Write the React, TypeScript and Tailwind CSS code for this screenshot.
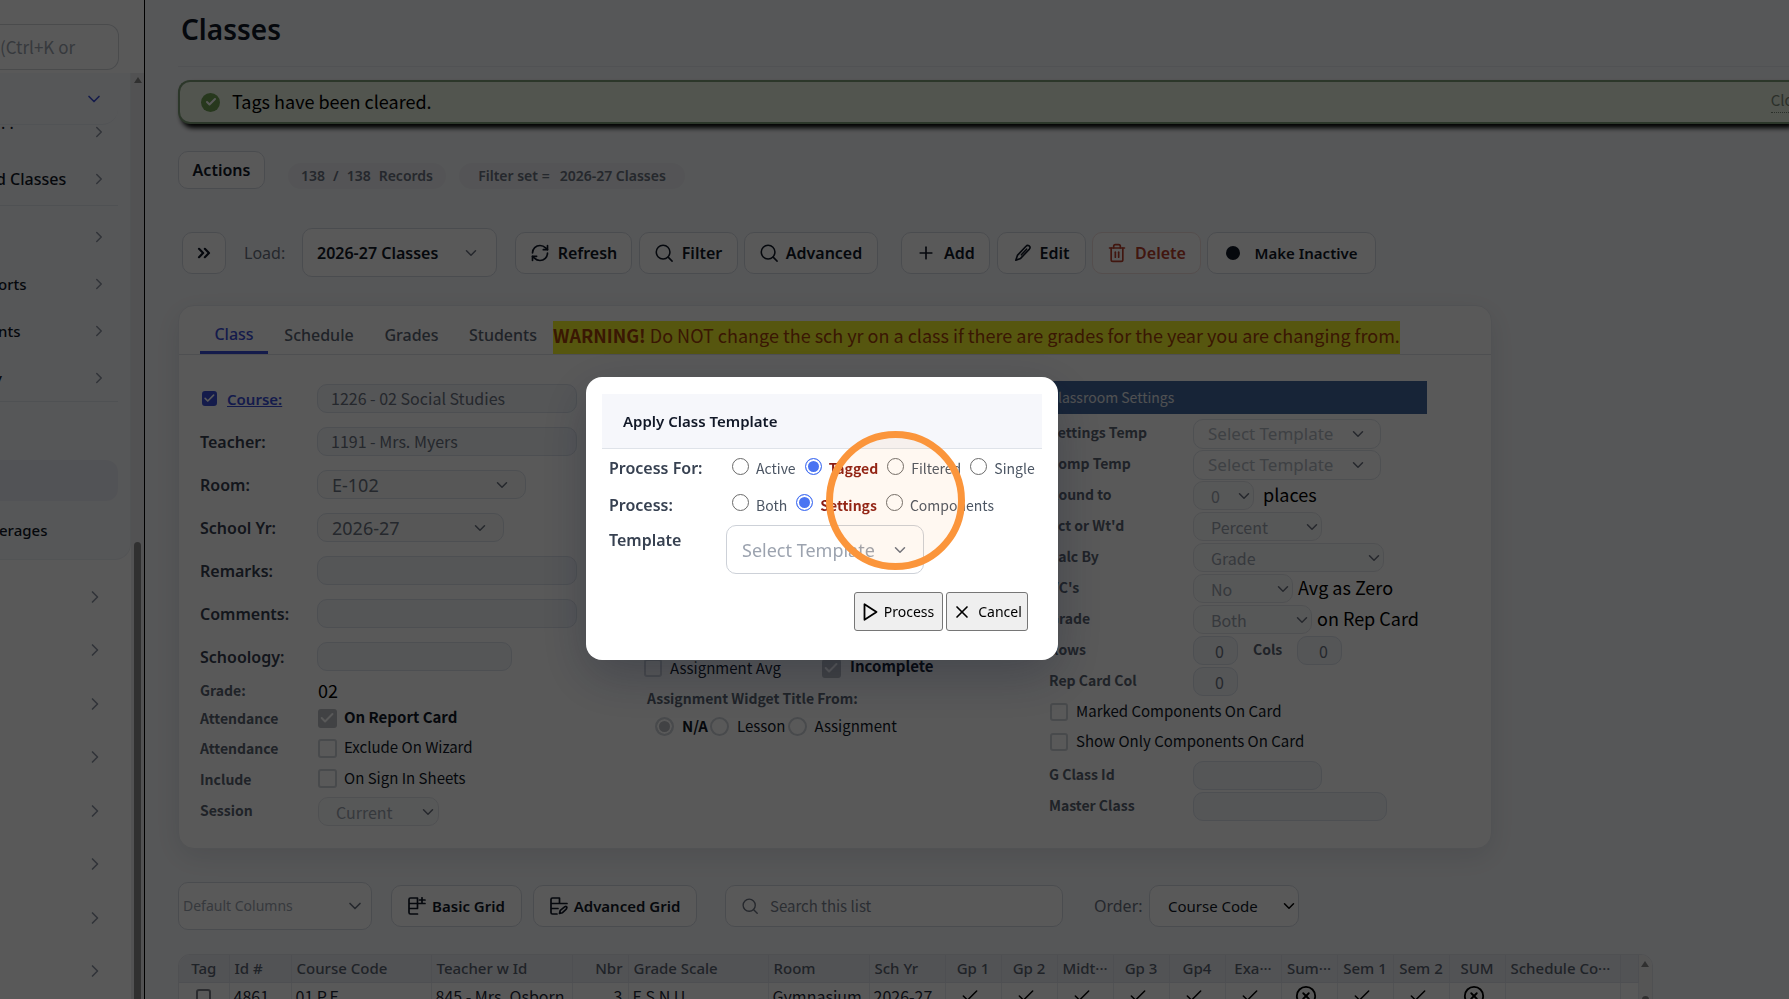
import React from "react";
import { ChevronDown, ChevronRight, ChevronsRight, RefreshCw, Plus, Trash2, Check, X, CircleX } from "lucide-react";

const SRC = "font-['Noto_Sans_CJK_SC','Noto_Sans',sans-serif]";

function SearchIcon({ className }: { className: string }) {
  return (
    <svg viewBox="0 0 20 20" fill="none" stroke="currentColor" strokeWidth="1.7" strokeLinecap="round" className={className} aria-hidden="true">
      <circle cx="9" cy="9" r="7.6" />
      <path d="M14.6 14.6 19 19" />
    </svg>
  );
}

function PencilIcon() {
  return (
    <svg viewBox="0 0 18 18" fill="none" stroke="currentColor" strokeWidth="1.6" strokeLinejoin="round" strokeLinecap="round" className="size-[18px]" aria-hidden="true">
      <path d="M1.800 16.200l1.600-4.800L12 2.200a2.200 2.200 0 0 1 3.400 2.900L6.600 14.400z" />
      <path d="M12.600 5.200L7.400 10.800" />
    </svg>
  );
}

function PlayIcon() {
  return (
    <svg viewBox="0 0 15 18" fill="none" stroke="currentColor" strokeWidth="1.8" strokeLinejoin="round" className="h-[18px] w-[15px]" aria-hidden="true">
      <path d="M1.500 1.200V16.800L13.500 9z" />
    </svg>
  );
}

function GridPlusIcon() {
  return (
    <svg viewBox="0 0 18 18" fill="none" stroke="currentColor" strokeWidth="1.7" strokeLinecap="round" strokeLinejoin="round" className="size-[18px]" aria-hidden="true">
      <path d="M9.500 17H2.500Q1 17 1 15.500V2.500Q1 1 2.500 1H9.500V11.500M1 6.500H17M1 11.500H9.500M14 0.800V6M11.500 3H17" />
    </svg>
  );
}

function GridPenIcon() {
  return (
    <svg viewBox="0 0 18 18" fill="none" stroke="currentColor" strokeWidth="1.7" strokeLinecap="round" strokeLinejoin="round" className="size-[18px]" aria-hidden="true">
      <path d="M7 17H2.500Q1 17 1 15.500V2.500Q1 1 2.500 1H9.500V6.500M1 6.500H17M1 11.500H8" />
      <path d="M9.500 16.500l.8-3.200 4.600-3.600q1.600-.8 2 .6-.2 1.600-1.400 2.600l-3 2.800z" />
    </svg>
  );
}

type SelectProps = { label: string; value: string; id?: string; wrap: string; field: string; chevron?: string; disabled?: boolean };

function Select({ label, value, id, wrap, field, chevron = "right-[9px] size-[18px] text-[#6b7280]", disabled }: SelectProps) {
  return (
    <div className={`relative shrink-0 ${wrap}`}>
      <select id={id} aria-label={label} defaultValue={value} disabled={disabled} className={`size-full appearance-none rounded-[10px] border opacity-100 outline-none ${field}`}>
        <option>{value}</option>
      </select>
      <ChevronDown className={`pointer-events-none absolute top-1/2 -translate-y-1/2 ${chevron}`} strokeWidth={2} />
    </div>
  );
}

function Box({ id, checked, size = "size-[19px]", tone = "border-[#cfd3da] checked:border-[#b9bcc2] checked:bg-[#b9bcc2]" }: { id: string; checked?: boolean; size?: string; tone?: string }) {
  return (
    <span className={`relative block shrink-0 ${size}`}>
      <input id={id} type="checkbox" defaultChecked={checked} className={`block size-full appearance-none rounded-[3px] border-2 bg-white ${tone}`} />
      {checked && <Check className="pointer-events-none absolute inset-0 m-auto size-[85%] text-white" strokeWidth={3} />}
    </span>
  );
}

const toolBtn = "flex h-[42px] shrink-0 items-center justify-center rounded-[10px] border border-[#d5dbe3] bg-white font-semibold leading-5 text-[#111827]";

function Sidebar() {
  const rows = ["", "orts", "nts", "y"];
  return (
    <aside className="flex h-screen w-[145px] shrink-0 flex-col overflow-hidden border-r border-black bg-white">
      <div className="h-[73px] pr-[25px] pt-6">
        <input aria-label="Search menu" placeholder="(Ctrl+K or" className={`h-[46px] w-full rounded-r-xl border border-l-0 border-[#d3d6db] pb-0.5 text-[17px] placeholder:text-[#9ca3af] ${SRC}`} />
      </div>
      <div className="flex min-h-0 flex-1">
        <nav className="flex min-w-0 flex-1 flex-col">
          <div className="rounded-br-2xl border-b border-r border-[#eceff4] bg-[#f7f9fc]">
            <div className="mr-3 flex h-[52px] items-center justify-end rounded-br-2xl border-b border-[#e9edf3] pr-[14px]">
              <ChevronDown className="size-[20px] text-[#3b4fd8]" strokeWidth={2} />
            </div>
            <div className="flex h-[28px] items-start justify-between pr-[22px]">
              <span className="-mt-2.5 pl-px text-base leading-4 text-[#111827]">. .</span>
              <ChevronRight className="-mt-0.5 size-[18px] text-[#8b93a1]" strokeWidth={2} />
            </div>
            <div className="mr-3 flex h-[53px] items-center justify-between border-b border-[#e3e7ee] pr-[10px]">
              <span className="-ml-1 text-base font-medium leading-5 text-[#111827]">d Classes</span>
              <ChevronRight className="size-[18px] text-[#8b93a1]" strokeWidth={2} />
            </div>
            <div className="pt-[7px]">
              {rows.map((t, i) => (
                <div key={i} className="flex h-[47px] items-center justify-between pr-[22px]">
                  <span className={`text-[15px] font-medium leading-5 text-[#111827] ${t === "y" ? "-ml-1.5" : "-ml-0.5"}`}>{t}</span>
                  <ChevronRight className="size-[18px] text-[#8b93a1]" strokeWidth={2} />
                </div>
              ))}
            </div>
            <div className="mr-3 border-t border-[#e3e7ee]" />
            <div className="mr-3 mt-[58px] h-[41px] rounded-r-xl bg-[#eceef5]" />
            <div className="flex h-[58px] items-center">
              <span className="-ml-px text-[15px] font-medium leading-5 text-[#111827]">erages</span>
            </div>
          </div>
          <div className="mt-[10px] flex flex-col">
            {Array.from({ length: 9 }, (_, i) => (
              <div key={i} className="flex h-[53px] shrink-0 items-center justify-end pr-[26px] even:h-[54px]">
                <ChevronRight className="size-[20px] text-[#8b93a1]" strokeWidth={2} />
              </div>
            ))}
          </div>
        </nav>
        <div className="flex w-[13px] shrink-0 flex-col items-center justify-between bg-[#ececee] pt-1">
          <svg viewBox="0 0 8 6" className="w-2" aria-hidden="true"><path d="M4 0l4 6H0z" fill="#8b8b8b" /></svg>
          <div className="h-[457px] w-[7px] rounded-t-full bg-[#8b8b8b]" />
        </div>
      </div>
    </aside>
  );
}

const leftLabel = "w-[117px] shrink-0 text-base font-semibold leading-5 text-[#374151]";
const smallLabel = `w-[118px] shrink-0 text-[14px] font-bold leading-5 text-[#5b6472] ${SRC}`;
const textField = `h-[29px] rounded-[10px] border border-[#dce2ea] bg-[#f3f6fa] px-[13px] text-base leading-5 text-[#6b7280] ${SRC}`;
const optText = `text-[15px] leading-5 text-[#111827] ${SRC}`;
const rightLabel = `w-[144px] shrink-0 pb-1 text-[14px] font-bold leading-5 text-[#5b6472] ${SRC}`;
const dimSelect = `border-[#e3e6eb] bg-[#fafbfc] pl-[17px] text-base leading-5 text-[#9ca3af] ${SRC}`;
const bigText = `whitespace-nowrap text-[18px] leading-6 text-black ${SRC}`;

function LeftForm() {
  return (
    <div className="w-[377px] shrink-0 pt-[29px]">
      <div className="flex flex-col gap-[14px]">
        <div className="flex h-[29px] items-center">
          <div className="flex w-[117px] shrink-0 items-center gap-[10px] pl-0.5">
            <Box id="course" checked size="size-[15px]" tone="border-[#3b4fd8] checked:bg-[#3b4fd8]" />
            <a href="#course" className="text-[15px] font-semibold leading-5 text-[#3b4fd8] underline">Course:</a>
          </div>
          <input aria-label="Course" defaultValue="1226 - 02 Social Studies" className={`w-full pb-0.5 ${textField}`} />
        </div>
        <div className="flex h-[29px] items-center">
          <label htmlFor="teacher" className={leftLabel}>Teacher:</label>
          <input id="teacher" defaultValue="1191 - Mrs. Myers" className={`w-full pb-0.5 ${textField}`} />
        </div>
        <div className="flex h-[29px] items-center">
          <label htmlFor="room" className={leftLabel}>Room:</label>
          <Select id="room" label="Room" value="E-102" wrap="h-[29px] w-[209px]" field="border-[#dce2ea] bg-[#f8faf9] pl-[14px] text-[18px] leading-5 text-[#6b7280]" chevron="right-[15px] size-[18px] text-[#6b7280]" />
        </div>
        <div className="flex h-[29px] items-center">
          <label htmlFor="year" className={leftLabel}>School Yr:</label>
          <Select id="year" label="School Yr" value="2026-27" wrap="h-[29px] w-[187px]" field="border-[#dce2ea] bg-[#f8faf9] pl-[14px] text-[18px] leading-5 text-[#6b7280]" chevron="right-[15px] size-[18px] text-[#6b7280]" />
        </div>
        <div className="flex h-[29px] items-center">
          <label htmlFor="remarks" className={leftLabel}>Remarks:</label>
          <input id="remarks" className={`w-full ${textField}`} />
        </div>
        <div className="flex h-[29px] items-center">
          <label htmlFor="comments" className={leftLabel}>Comments:</label>
          <input id="comments" className={`w-full ${textField}`} />
        </div>
        <div className="flex h-[29px] items-center">
          <label htmlFor="schoology" className={leftLabel}>Schoology:</label>
          <input id="schoology" className={`w-[195px] ${textField}`} />
        </div>
      </div>
      <div className="mt-[5px] flex h-[27px] items-center">
        <span className={smallLabel}>Grade:</span>
        <span className={bigText}>02</span>
      </div>
      <div className="flex h-[30px] items-center">
        <span className={smallLabel}>Attendance</span>
        <Box id="report" checked />
        <label htmlFor="report" className={`pb-0.5 pl-[7px] font-bold ${optText}`}>On Report Card</label>
      </div>
      <div className="flex h-[30px] items-center">
        <span className={smallLabel}>Attendance</span>
        <Box id="wizard" />
        <label htmlFor="wizard" className={`pb-0.5 pl-[7px] ${optText}`}>Exclude On Wizard</label>
      </div>
      <div className="flex h-[31px] items-center">
        <span className={smallLabel}>Include</span>
        <Box id="sheets" />
        <label htmlFor="sheets" className={`pb-0.5 pl-[7px] ${optText}`}>On Sign In Sheets</label>
      </div>
      <div className="flex h-[32px] items-end">
        <label htmlFor="session" className={`pb-1.5 ${smallLabel}`}>Session</label>
        <Select id="session" label="Session" value="Current" wrap="h-[29px] w-[121px]" field={dimSelect} chevron="right-[2px] size-[18px] text-[#6b7280]" />
      </div>
    </div>
  );
}

function MiddleForm() {
  return (
    <div className="w-[405px] shrink-0 pl-[67px] pt-[301px]">
      <div className="flex h-6 items-center">
        <Box id="avg" size="size-[18px]" />
        <label htmlFor="avg" className={`w-[160px] pl-[8px] ${optText}`}>Assignment Avg</label>
        <Box id="inc" checked />
        <label htmlFor="inc" className={`pb-1 pl-[9px] font-bold ${optText}`}>Incomplete</label>
      </div>
      <div className={`mt-1.5 h-6 pl-[3px] text-[14px] font-bold leading-6 text-[#5b6472] ${SRC}`}>Assignment Widget Title From:</div>
      <div className="mt-1 flex h-6 items-center pl-[11px]">
        {["N/A", "Lesson", "Assignment"].map((t, i) => (
          <label key={t} className={`flex items-center gap-[8px] pr-[2px] ${optText} ${i === 0 ? "font-bold" : ""}`}>
            <input type="radio" name="widget" defaultChecked={i === 0} className="size-[19px] appearance-none rounded-full border-2 border-[#cfd3da] bg-white checked:bg-[#b9bcc2] checked:shadow-[inset_0_0_0_2px_#fff]" />
            {t}
          </label>
        ))}
      </div>
    </div>
  );
}

function RightForm() {
  const row = "flex h-[31px] items-center";
  const arrow = "right-[1px] size-[18px] text-[#6b7280]";
  const tplField = "border-[#dfe4ea] bg-white pl-[14px] text-[17px] leading-5 text-[#b3b9c3]";
  return (
    <div className="w-[378px] shrink-0 pt-[26px]">
      <div className={`flex h-[33px] items-center bg-[#44699f] pb-0.5 text-[14px] leading-5 text-[#e5e7eb] ${SRC}`}>Classroom Settings</div>
      <div className="mt-[4px] flex flex-col">
        <div className={row}>
          <label htmlFor="st" className={rightLabel}>Settings Temp</label>
          <Select id="st" label="Settings Temp" value="Select Template" wrap="h-[30px] w-[188px]" field={tplField} chevron="right-[14px] size-[18px] text-[#6b7280]" />
        </div>
        <div className={row}>
          <label htmlFor="ct" className={rightLabel}>Comp Temp</label>
          <Select id="ct" label="Comp Temp" value="Select Template" wrap="h-[30px] w-[188px]" field={tplField} chevron="right-[14px] size-[18px] text-[#6b7280]" />
        </div>
        <div className={row}>
          <label htmlFor="rt" className={rightLabel}>Round to</label>
          <Select id="rt" label="Round to" value="0" wrap="h-[29px] w-[61px]" field={dimSelect} chevron={arrow} />
          <span className={`pb-1 pl-[9px] ${bigText}`}>places</span>
        </div>
        <div className={row}>
          <label htmlFor="pw" className={rightLabel}>Pct or Wt'd</label>
          <Select id="pw" label="Pct or Wt'd" value="Percent" wrap="h-[29px] w-[129px]" field={dimSelect} chevron={arrow} />
        </div>
        <div className={row}>
          <label htmlFor="cb" className={rightLabel}>Calc By</label>
          <Select id="cb" label="Calc By" value="Grade" wrap="h-[29px] w-[191px]" field={dimSelect} chevron={arrow} />
        </div>
        <div className={row}>
          <label htmlFor="nc" className={rightLabel}>I/C's</label>
          <Select id="nc" label="I/C's" value="No" wrap="h-[29px] w-[100px]" field={dimSelect} chevron={arrow} />
          <span className={`pb-1 pl-[5px] ${bigText}`}>Avg as Zero</span>
        </div>
        <div className={row}>
          <label htmlFor="gr" className={rightLabel}>Grade</label>
          <Select id="gr" label="Grade" value="Both" wrap="h-[29px] w-[119px]" field={dimSelect} chevron={arrow} />
          <span className={`pb-1 pl-[5px] ${bigText}`}>on Rep Card</span>
        </div>
        <div className={row}>
          <label htmlFor="rows" className={rightLabel}>Rows</label>
          <input id="rows" defaultValue="0" className={`w-[45px] text-right ${textField}`} />
          <label htmlFor="cols" className={`w-[59px] pb-1 pl-[15px] text-[14px] font-bold leading-5 text-[#5b6472] ${SRC}`}>Cols</label>
          <input id="cols" defaultValue="0" className={`w-[45px] text-right ${textField}`} />
        </div>
        <div className={row}>
          <label htmlFor="rc" className={rightLabel}>Rep Card Col</label>
          <input id="rc" defaultValue="0" className={`w-[45px] text-right ${textField}`} />
        </div>
        <div className="flex h-[30px] items-center pl-px">
          <Box id="marked" size="size-[18px]" />
          <label htmlFor="marked" className={`pb-0.5 pl-[8px] ${optText}`}>Marked Components On Card</label>
        </div>
        <div className="flex h-[30px] items-center pl-px">
          <Box id="only" size="size-[18px]" />
          <label htmlFor="only" className={`pb-0.5 pl-[8px] ${optText}`}>Show Only Components On Card</label>
        </div>
        <div className={`mt-[3px] ${row}`}>
          <label htmlFor="gid" className={rightLabel}>G Class Id</label>
          <input id="gid" className={`w-[129px] ${textField}`} />
        </div>
        <div className={row}>
          <label htmlFor="mc" className={rightLabel}>Master Class</label>
          <input id="mc" className={`w-[194px] ${textField}`} />
        </div>
      </div>
    </div>
  );
}

const cols = [
  { t: "Tag", w: "w-[50px]", a: "text-center" },
  { t: "Id #", w: "w-[62px]", a: "" },
  { t: "Course Code", w: "w-[140px]", a: "" },
  { t: "Teacher w Id", w: "w-[141px]", a: "" },
  { t: "Nbr", w: "w-[56px]", a: "text-right" },
  { t: "Grade Scale", w: "w-[140px]", a: "" },
  { t: "Room", w: "w-[101px]", a: "" },
  { t: "Sch Yr", w: "w-[76px]", a: "" },
  { t: "Gp 1", w: "w-[56px]", a: "text-center" },
  { t: "Gp 2", w: "w-[56px]", a: "text-center" },
  { t: "Midt···", w: "w-[56px]", a: "text-center" },
  { t: "Gp 3", w: "w-[56px]", a: "text-center" },
  { t: "Gp4", w: "w-[56px]", a: "text-center" },
  { t: "Exa···", w: "w-[56px]", a: "text-center" },
  { t: "Sum···", w: "w-[56px]", a: "text-center" },
  { t: "Sem 1", w: "w-[56px]", a: "text-center" },
  { t: "Sem 2", w: "w-[56px]", a: "text-center" },
  { t: "SUM", w: "w-[56px]", a: "text-center" },
  { t: "Schedule Co···", w: "w-[115px]", a: "" },
  { t: "", w: "w-[18px]", a: "" },
];
const cells = ["box", "4861", "01 P.E.", "845 - Mrs. Osborn", "3", "E S N U", "Gymnasium", "2026-27", "y", "y", "y", "y", "y", "y", "n", "y", "y", "n", "", ""];

function Cell({ v }: { v: string }) {
  if (v === "box") return <input type="checkbox" aria-label="Tag row" className="mx-auto block size-[15px] appearance-none rounded-[3px] border-2 border-[#7b7f87] bg-white" />;
  if (v === "y") return <Check className="mx-auto block size-[20px] text-black" strokeWidth={1.8} />;
  if (v === "n") return <CircleX className="mx-auto block size-[22px] text-black" strokeWidth={2} />;
  return <>{v}</>;
}

function DataGrid() {
  return (
    <div className="mt-6 flex w-[1475px] shrink-0 overflow-hidden rounded-t-xl border border-[#e1e4ea] bg-white">
      <table className="w-[1459px] shrink-0 table-fixed border-collapse">
        <thead>
          <tr className="h-[27px] bg-[#eceef4]">
            {cols.map((c, i) => (
              <th key={i} className={`whitespace-nowrap border-b border-r border-[#dfe2ea] text-[15px] font-medium leading-5 text-[#5b6472] ${c.w} ${c.a === "text-center" ? "px-0 text-center" : c.a === "" ? "px-[5px] text-left" : "px-[5px] text-right"}`}>{c.t}</th>
            ))}
          </tr>
        </thead>
        <tbody>
          <tr className="h-[28px]">
            {cells.map((v, i) => (
              <td key={i} className={`whitespace-nowrap border-r border-[#e8ebf0] pl-[4px] text-base leading-5 text-[#1f2937] ${SRC} ${cols[i].a} ${v === "y" || v === "n" ? "pr-[10px]" : "pr-[5px]"}`}><Cell v={v} /></td>
            ))}
          </tr>
        </tbody>
      </table>
      <div className="flex min-w-0 flex-1 flex-col items-center justify-between overflow-hidden bg-[#f3f3f4] pt-1.5">
        <svg viewBox="0 0 8 6" className="w-2" aria-hidden="true"><path d="M4 0l4 6H0z" fill="#8b8b8b" /></svg>
        <div className="h-[14px] w-[7px] rounded-t-full bg-[#8b8b8b]" />
      </div>
    </div>
  );
}

function Main() {
  return (
    <main className="flex min-w-0 flex-1 flex-col bg-[#f7f9fc] pl-[33px]">
      <header className="flex h-[67px] shrink-0 items-start border-b border-[#e8ebf0] pl-[3px] pt-3">
        <h1 className="text-[28px] font-semibold leading-[34px] text-[#111827]">Classes</h1>
      </header>
      <div role="status" className="mt-[13px] flex h-[44px] shrink-0 items-center rounded-l-xl border-2 border-r-0 border-[#7f9f78] bg-[#eaf2e2] pl-[21px] shadow-[3px_4px_5px_#000]">
        <span className="flex size-[19px] items-center justify-center rounded-full bg-[#6fa055]">
          <Check className="size-3 text-white" strokeWidth={4} />
        </span>
        <span className={`pb-0.5 pl-[12px] ${bigText}`}>Tags have been cleared.</span>
        <a href="#close" className={`-mr-5 mb-1 ml-auto border-b border-dotted border-[#7c8a78] text-[15px] leading-6 text-[#7c8a78] ${SRC}`}>Close</a>
      </div>
      <div className="mt-[27px] flex h-[38px] shrink-0 items-start">
        <button className="flex h-[38px] w-[87px] items-center justify-center rounded-[10px] border border-[#d5dbe3] bg-white text-base font-semibold leading-5 text-[#111827]">Actions</button>
        <span className="ml-[23px] mt-3 flex h-[26px] w-[158px] items-center justify-center gap-2 rounded-full bg-[#eff1f5] text-sm font-semibold leading-4 text-[#6b7280]">
          <span>138</span><span>/</span><span>138</span><span>Records</span>
        </span>
        <span className="ml-[13px] mt-3 flex h-[26px] w-[226px] items-center justify-center gap-2.5 rounded-full bg-[#eff1f5] text-sm font-semibold leading-4 text-[#6b7280]">
          <span>Filter set =</span><span>2026-27 Classes</span>
        </span>
      </div>
      <div className="mt-[39px] flex h-[49px] shrink-0 items-center pl-1">
        <button aria-label="Expand" className={`${toolBtn} w-[44px]`}><ChevronsRight className="size-5" strokeWidth={2.6} /></button>
        <label htmlFor="load" className="w-[76px] pl-[18px] text-base leading-5 text-[#6b7280]">Load:</label>
        <Select id="load" label="Load" value="2026-27 Classes" wrap="h-[49px] w-[195px]" field="border-[#d5dbe3] bg-white pl-[14px] text-base font-semibold leading-5 text-[#111827]" chevron="right-[17px] size-[18px] text-[#6b7280]" />
        <button className={`${toolBtn} ml-[18px] w-[117px] gap-[8px]`}><RefreshCw className="size-[20px]" strokeWidth={2} />Refresh</button>
        <button className={`${toolBtn} ml-[7px] w-[99px] gap-[9px]`}><SearchIcon className="size-[18px]" />Filter</button>
        <button className={`${toolBtn} ml-[6px] w-[134px] gap-[8px]`}><SearchIcon className="size-[18px]" />Advanced</button>
        <button className={`${toolBtn} ml-[23px] w-[89px] gap-[8px]`}><Plus className="size-[20px]" strokeWidth={2} />Add</button>
        <button className={`${toolBtn} ml-[7px] w-[89px] gap-[8px]`}><PencilIcon />Edit</button>
        <button className={`${toolBtn} ml-[6px] w-[109px] gap-[8px] !border-[#f0dedd] !text-[#b9402c]`}><Trash2 className="size-[20px]" strokeWidth={2} />Delete</button>
        <button className={`${toolBtn} ml-[6px] w-[169px] gap-[15px] text-[15px]`}><span className="size-[14px] rounded-full bg-[#111827]" />Make Inactive</button>
      </div>
      <section className="mt-[28px] w-full max-w-[1314px] shrink-0 rounded-2xl border border-[#e8ebf0] bg-white pb-[22px] shadow-[0_8px_28px_rgba(15,23,42,0.1)]">
        <div className="flex h-[49px] items-end border-b border-[#dfe3e9] pl-[21px]">
          <button className="h-9 w-[68px] border-b-[3px] border-[#3b4fd8] pb-[1px] text-base font-medium leading-5 text-[#3b4fd8]">Class</button>
          <button className="h-9 w-[102px] pb-0.5 text-base font-medium leading-5 text-[#5b6472]">Schedule</button>
          <button className="h-9 w-[83px] pb-0.5 text-base font-medium leading-5 text-[#5b6472]">Grades</button>
          <button className="h-9 w-[100px] pb-0.5 text-base font-medium leading-5 text-[#5b6472]">Students</button>
          <p className={`h-[33px] whitespace-nowrap bg-[#f7f72c] text-[18px] leading-[29px] text-[#a5420a] ${SRC}`}>
            <b>WARNING!</b> Do NOT change the sch yr on a class if there are grades for the year you are changing from.
          </p>
        </div>
        <div className="flex pl-[21px]">
          <LeftForm />
          <MiddleForm />
          <div className="w-[67px] shrink-0" />
          <RightForm />
        </div>
      </section>
      <div className="mt-[33px] flex h-[48px] shrink-0 items-center">
        <Select label="Columns" value="Default Columns" wrap="h-[48px] w-[194px]" field="border-[#d5dbe3] bg-white pl-[4px] text-sm leading-5 text-[#9ca3af]" chevron="right-[7px] size-5 text-[#6b7280]" />
        <button className={`${toolBtn} ml-[19px] w-[131px] gap-[6px] text-[15px]`}><GridPlusIcon />Basic Grid</button>
        <button className={`${toolBtn} ml-[11px] w-[164px] gap-[6px] text-[15px]`}><GridPenIcon />Advanced Grid</button>
        <div className="relative ml-[28px] h-[42px] w-[338px] text-[#6b7280]">
          <input type="search" aria-label="Search this list" placeholder="Search this list" className={`size-full rounded-[10px] border border-[#d5dbe3] bg-white pb-0.5 pl-[44px] text-[15px] placeholder:text-[#7b8391] ${SRC}`} />
          <SearchIcon className="absolute left-[17px] top-[13px] size-4" />
        </div>
        <label htmlFor="order" className="w-[86px] pl-[31px] text-base leading-5 text-[#6b7280]">Order:</label>
        <Select id="order" label="Order" value="Course Code" wrap="h-[42px] w-[150px]" field="border-[#d5dbe3] bg-white pl-[18px] text-[15px] leading-5 text-[#111827]" chevron="right-[1px] size-[18px] text-black" />
      </div>
      <DataGrid />
    </main>
  );
}

function Radio({ name, label, checked }: { name: string; label: string; checked?: boolean }) {
  return (
    <label className={`flex items-center gap-[7px] text-[14px] leading-5 ${SRC} ${checked ? "font-bold text-[#8b1c13]" : "text-[#4b5563]"}`}>
      <input type="radio" name={name} defaultChecked={checked} className="-mt-1 size-[17px] appearance-none rounded-full border border-[#6b6b6b] bg-white checked:border-[#4a74f2] checked:bg-[#4a74f2] checked:shadow-[inset_0_0_0_2px_#fff]" />
      {label}
    </label>
  );
}

function Dialog() {
  const label = "w-[123px] shrink-0 text-base font-semibold leading-5 text-[#374151]";
  const btn = "flex h-[39px] items-center justify-center gap-[6px] rounded-[3px] border border-[#767676] bg-[#efefef] text-sm leading-5 text-black";
  return (
    <div role="dialog" aria-label="Apply Class Template" className="absolute left-[586px] top-[377px] w-[472px] rounded-2xl bg-white px-4 pb-[29px] pt-[17px] shadow-[0_16px_50px_rgba(15,23,42,0.28)]">
      <h2 className="flex h-[55px] items-center border-b border-[#dfe3e9] bg-[#f6f7fb] pl-[21px] text-[15px] font-semibold leading-5 text-[#111827]">Apply Class Template</h2>
      <div className="pl-[7px]">
        <div className="flex h-[38px] items-center">
          <span className={label}>Process For:</span>
          <div className="flex gap-[9px]">
            <Radio name="for" label="Active" />
            <Radio name="for" label="Tagged" checked />
            <Radio name="for" label="Filtered" />
            <Radio name="for" label="Single" />
          </div>
        </div>
        <div className="flex h-[35px] items-center">
          <span className={label}>Process:</span>
          <div className="flex gap-[9px]">
            <Radio name="what" label="Both" />
            <Radio name="what" label="Settings" checked />
            <Radio name="what" label="Components" />
          </div>
        </div>
        <div className="flex items-start pt-[3px]">
          <label htmlFor="tpl" className="w-[117px] shrink-0 pt-[5px] text-base font-semibold leading-5 text-[#374151]">Template</label>
          <Select id="tpl" label="Template" value="Select Template" wrap="h-[49px] w-[198px]" field="border-[#cdd1d8] bg-white pl-[15px] text-[18px] leading-6 text-[#9ca3af]" chevron="right-[15px] size-[18px] text-[#6b7280]" />
        </div>
      </div>
      <div className="mt-[18px] flex justify-end gap-[3px] pr-[14px]">
        <button className={`${btn} w-[89px]`}><PlayIcon />Process</button>
        <button className={`${btn} w-[82px]`}><X className="size-[20px]" strokeWidth={2} />Cancel</button>
      </div>
    </div>
  );
}

export default function App() {
  return (
    <div className="flex h-screen overflow-hidden bg-[#f7f9fc] font-['Noto_Sans',sans-serif]">
      <Sidebar />
      <Main />
      <div className="fixed inset-0 bg-black/65">
        <Dialog />
        <div className="pointer-events-none absolute left-[826px] top-[431px] size-[139px] rounded-full border-[7px] border-[#fb953b] bg-[#fb953b]/7" />
      </div>
    </div>
  );
}
